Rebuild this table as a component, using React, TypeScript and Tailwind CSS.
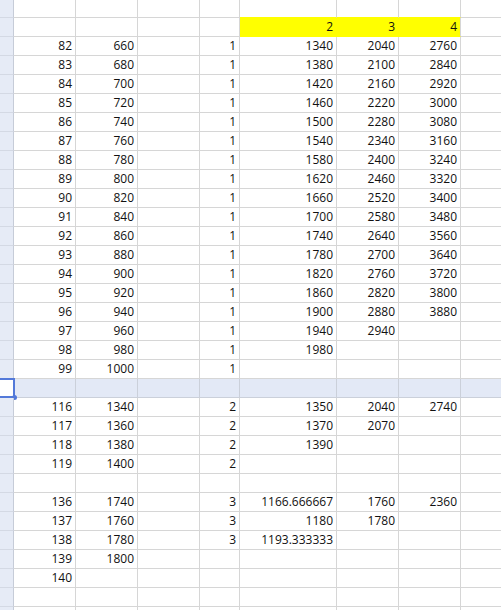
import React from "react";

type Row = {
  kind: "data" | "blank" | "selected" | "head";
  cells?: (string | undefined)[];
};

const rows: Row[] = [
  { kind: "blank" },
  { kind: "head", cells: ["", "", "", "", "2", "3", "4"] },
  { kind: "data", cells: ["82", "660", "", "1", "1340", "2040", "2760"] },
  { kind: "data", cells: ["83", "680", "", "1", "1380", "2100", "2840"] },
  { kind: "data", cells: ["84", "700", "", "1", "1420", "2160", "2920"] },
  { kind: "data", cells: ["85", "720", "", "1", "1460", "2220", "3000"] },
  { kind: "data", cells: ["86", "740", "", "1", "1500", "2280", "3080"] },
  { kind: "data", cells: ["87", "760", "", "1", "1540", "2340", "3160"] },
  { kind: "data", cells: ["88", "780", "", "1", "1580", "2400", "3240"] },
  { kind: "data", cells: ["89", "800", "", "1", "1620", "2460", "3320"] },
  { kind: "data", cells: ["90", "820", "", "1", "1660", "2520", "3400"] },
  { kind: "data", cells: ["91", "840", "", "1", "1700", "2580", "3480"] },
  { kind: "data", cells: ["92", "860", "", "1", "1740", "2640", "3560"] },
  { kind: "data", cells: ["93", "880", "", "1", "1780", "2700", "3640"] },
  { kind: "data", cells: ["94", "900", "", "1", "1820", "2760", "3720"] },
  { kind: "data", cells: ["95", "920", "", "1", "1860", "2820", "3800"] },
  { kind: "data", cells: ["96", "940", "", "1", "1900", "2880", "3880"] },
  { kind: "data", cells: ["97", "960", "", "1", "1940", "2940", ""] },
  { kind: "data", cells: ["98", "980", "", "1", "1980", "", ""] },
  { kind: "data", cells: ["99", "1000", "", "1", "", "", ""] },
  { kind: "selected" },
  { kind: "data", cells: ["116", "1340", "", "2", "1350", "2040", "2740"] },
  { kind: "data", cells: ["117", "1360", "", "2", "1370", "2070", ""] },
  { kind: "data", cells: ["118", "1380", "", "2", "1390", "", ""] },
  { kind: "data", cells: ["119", "1400", "", "2", "", "", ""] },
  { kind: "blank" },
  { kind: "data", cells: ["136", "1740", "", "3", "1166.666667", "1760", "2360"] },
  { kind: "data", cells: ["137", "1760", "", "3", "1180", "1780", ""] },
  { kind: "data", cells: ["138", "1780", "", "3", "1193.333333", "", ""] },
  { kind: "data", cells: ["139", "1800", "", "", "", "", ""] },
  { kind: "data", cells: ["140", "", "", "", "", "", ""] },
  { kind: "blank" },
  { kind: "blank" },
];

const SheetRow = ({ row, first }: { row: Row; first: boolean }) => {
  const h = first ? "h-[18px]" : "h-[19px]";
  const cells = row.cells ?? ["", "", "", "", "", "", ""];
  const selected = row.kind === "selected";

  return (
    <>
      <div
        className={`${h} relative border-r border-b border-r-[#c6ccd8] border-b-[#d4d9e4] ${
          selected ? "bg-white" : "bg-[#e6ebf6]"
        }`}
      >
        {selected && (
          <>
            <div className="absolute -top-[1px] left-0 w-[15px] h-[20px] border-t-2 border-r-2 border-b-2 border-[#5379d9]" />
            <div className="absolute -bottom-[3px] left-[12px] w-[5px] h-[5px] rounded-full bg-[#5379d9]" />
          </>
        )}
      </div>
      {cells.map((v, i) => {
        const yellow = row.kind === "head" && i >= 4;
        let cls = "border-r border-b border-[#d6d6d6]";
        if (first && i >= 4) cls = "border-r border-r-[#d6d6d6] border-b border-b-[#ffff00]";
        if (selected) cls = "border-r border-b border-[#cbd0da] bg-[#e3e9f6]";
        if (yellow)
          cls = `border-b border-b-[#ffff00] bg-[#ffff00] ${
            i === 6 ? "border-r border-r-[#d6d6d6]" : "border-r border-r-[#ffff00]"
          }`;
        return (
          <div
            key={i}
            className={`${h} ${cls} text-right pr-[3px] leading-[18px] whitespace-nowrap overflow-hidden text-[#111]`}
          >
            {v}
          </div>
        );
      })}
      <div
        className={`${h} border-b ${
          selected ? "border-[#cbd0da] bg-[#e3e9f6]" : "border-[#d6d6d6]"
        }`}
      />
    </>
  );
};

export default function App() {
  return (
    <div
      className="w-[501px] h-[610px] overflow-hidden bg-white text-[12px]"
      style={{ fontFamily: '"Open Sans", "Liberation Sans", sans-serif' }}
    >
      <div className="grid grid-cols-[14px_62px_62px_62px_40px_97px_62px_62px_1fr]">
        {rows.map((r, i) => (
          <SheetRow key={i} row={r} first={i === 0} />
        ))}
      </div>
    </div>
  );
}
